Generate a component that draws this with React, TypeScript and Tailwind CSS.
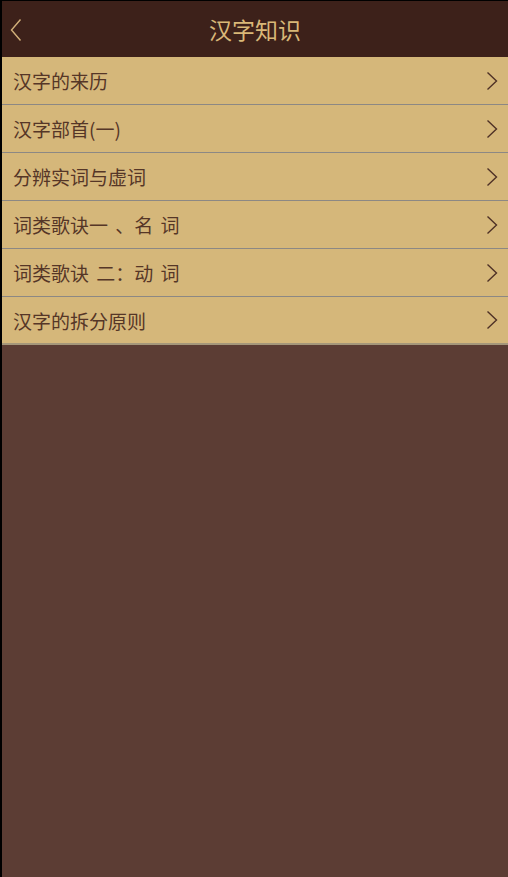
import React from "react";

const items = [
  "汉字的来历",
  "汉字部首(一)",
  "分辨实词与虚词",
  "词类歌诀一 、名 词",
  "词类歌诀 二：动 词",
  "汉字的拆分原则",
];

function Chevron({ className }: { className?: string }) {
  return (
    <svg viewBox="0 0 12 20" className={className} fill="none">
      <path d="M1.5 1.5 L10.5 10 L1.5 18.5" stroke="currentColor" strokeWidth="1.4" />
    </svg>
  );
}

export default function App() {
  return (
    <div
      className="w-[508px] h-[877px] bg-black pl-[2px] pt-px overflow-hidden"
      style={{ fontFamily: '"Noto Sans CJK SC", "Noto Sans", sans-serif' }}
    >
      <div className="flex flex-col h-full bg-[#5c3d34]">
        {/* header */}
        <div className="relative h-[56px] bg-[#3d211a] flex items-center justify-center shrink-0">
          <svg viewBox="0 0 12 24" className="absolute left-[8px] top-[17px] w-[12px] h-[24px] text-[#d2b07a]" fill="none">
            <path d="M10.5 1.5 L1.5 12 L10.5 22.5" stroke="currentColor" strokeWidth="1.4" />
          </svg>
          <h1 className="text-[23px] text-[#d9b878] leading-none">汉字知识</h1>
        </div>

        {/* list */}
        <div className="flex flex-col">
          {items.map((t, i) => (
            <div
              key={i}
              className={`h-[48px] flex items-center justify-between pl-[11px] pr-[10px] bg-[#d5b77a] border-b ${
                i === items.length - 1 ? "border-b-2 border-[#a5977a]" : "border-[#8c8884]"
              }`}
            >
              <span className="text-[19px] text-[#553627] whitespace-pre leading-none [word-spacing:3px]">{t}</span>
              <Chevron className="w-[12px] h-[20px] text-[#4e3126]" />
            </div>
          ))}
        </div>
      </div>
    </div>
  );
}
